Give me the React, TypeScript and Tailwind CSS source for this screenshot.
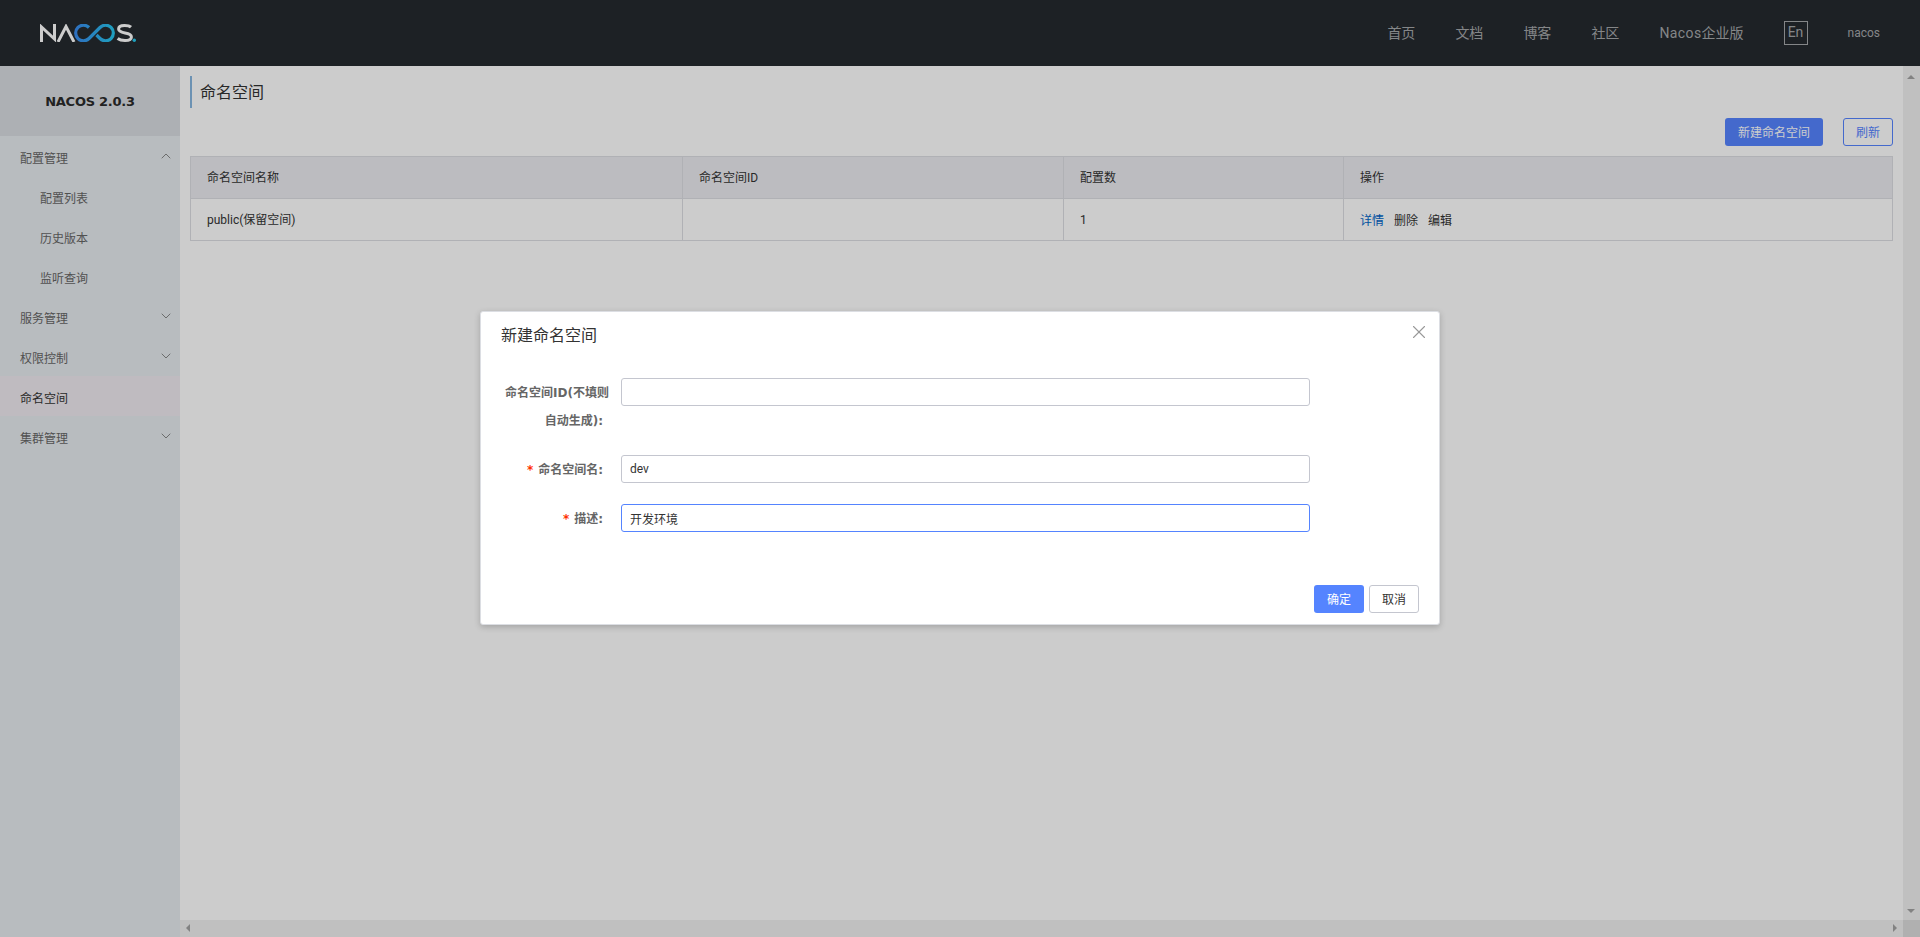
import React from 'react';
import { ChevronDown, ChevronUp, X } from 'lucide-react';

const navLinks = ['首页', '文档', '博客', '社区'];

const menu = [
  { label: '配置管理', arrow: 'up' },
  { label: '配置列表', child: true },
  { label: '历史版本', child: true },
  { label: '监听查询', child: true },
  { label: '服务管理', arrow: 'down' },
  { label: '权限控制', arrow: 'down' },
  { label: '命名空间', active: true },
  { label: '集群管理', arrow: 'down' },
];

const tableCols = 'grid grid-cols-[492px_381px_280px_1fr]';
const labelFont = "font-['DejaVu_Sans','Noto_Sans_CJK_SC',sans-serif] font-bold";

function Logo() {
  return (
    <svg width="96" height="18" viewBox="0 0 96 18" fill="none" strokeWidth="3">
      <defs>
        <linearGradient id="nacosLoop" x1="35" y1="0" x2="75" y2="0" gradientUnits="userSpaceOnUse">
          <stop offset="0" stopColor="#3a8cf0" />
          <stop offset="1" stopColor="#26c8ee" />
        </linearGradient>
      </defs>
      <path d="M1.5 18V3L14.5 15V0" stroke="#ffffff" />
      <path d="M18 18L26 2.5L34 18" stroke="#ffffff" />
      <path
        d="M49 3.5A7.8 7.8 0 1 0 49 14.5L60 3.5A7.8 7.8 0 1 1 60 14.5L56.5 11"
        stroke="url(#nacosLoop)"
        strokeWidth="3.2"
      />
      <path
        d="M91 3.2C89.5 1.8 87 1.5 84.5 1.5C81 1.5 78.6 2.8 78.6 5.1C78.6 10.5 91.4 7.5 91.4 12.9C91.4 15.2 89 16.5 85 16.5C82.3 16.5 79.6 16 77.6 14.5"
        stroke="#ffffff"
      />
      <circle cx="94.3" cy="16.2" r="1.7" fill="#26c8ee" />
    </svg>
  );
}

function Field({ value, focused }: { value: string; focused?: boolean }) {
  return (
    <input
      readOnly
      value={value}
      className={`h-7 w-[689px] rounded-[3px] border bg-white px-2 text-xs text-[#333] outline-none ${
        focused ? 'border-[#5584ff]' : 'border-[#c4c6cf]'
      }`}
    />
  );
}

export default function App() {
  return (
    <div className="relative h-[937px] w-[1920px] overflow-hidden bg-white font-['Roboto','Noto_Sans_CJK_SC',sans-serif] text-xs text-[#333]">
      <header className="flex h-[66px] items-center bg-[#252a2f] pl-10 pr-10">
        <Logo />
        <nav className="ml-auto flex items-center text-sm text-[#a6a8ab]">
          {navLinks.map((link) => (
            <a key={link} className="mr-10">
              {link}
            </a>
          ))}
          <a className="mr-10">
            <span className="tracking-[0.4px]">Nacos</span>企业版
          </a>
          <span className="flex h-6 w-6 items-center justify-center border border-[#a6a8ab] pb-[2px] text-sm">En</span>
          <span className="ml-10 text-xs">nacos</span>
        </nav>
      </header>

      <div className="flex h-[871px]">
        <aside className="w-[180px] shrink-0 bg-[#e6ebef]">
          <div className="flex h-[70px] items-center justify-center bg-[#d9dce1] pt-[1px] font-['DejaVu_Sans',sans-serif] text-[13px] font-bold tracking-[-0.25px] text-[#2b2b2b]">
            NACOS 2.0.3
          </div>
          {menu.map((item) => (
            <div
              key={item.label}
              className={`relative flex h-10 items-center pt-[6px] ${item.child ? 'pl-10' : 'pl-5'} ${
                item.active ? 'bg-[#efeaf0] text-[#333]' : 'text-[#666]'
              }`}
            >
              {item.label}
              {item.arrow === 'up' && (
                <ChevronUp size={16} strokeWidth={1.3} className="absolute right-[6px] top-[12px] text-[#777]" />
              )}
              {item.arrow === 'down' && (
                <ChevronDown size={16} strokeWidth={1.3} className="absolute right-[6px] top-[12px] text-[#777]" />
              )}
            </div>
          ))}
        </aside>

        <div className="flex min-w-0 flex-1 flex-col">
          <div className="flex min-h-0 flex-1">
            <main className="min-w-0 flex-1 px-[10px] pt-[10px]">
              <h1 className="flex h-8 items-center border-l-2 border-[#88b7e0] pl-2 pt-[2px] text-base font-normal text-[#333]">
                命名空间
              </h1>
              <div className="mt-[10px] flex justify-end gap-5">
                <button className="h-7 w-[98px] rounded-[3px] bg-[#5584ff] pt-[2px] text-xs text-white">新建命名空间</button>
                <button className="h-7 w-[50px] rounded-[3px] border border-[#5584ff] pt-[2px] text-xs text-[#5584ff]">
                  刷新
                </button>
              </div>
              <div className="mt-[10px] border border-[#dcdee3]">
                <div className={`${tableCols} h-[41px] items-center bg-[#ebecf0]`}>
                  <div className="flex h-full items-center border-r border-[#dcdee3] pl-4">命名空间名称</div>
                  <div className="flex h-full items-center border-r border-[#dcdee3] pl-4">命名空间ID</div>
                  <div className="flex h-full items-center border-r border-[#dcdee3] pl-4">配置数</div>
                  <div className="pl-4">操作</div>
                </div>
                <div className={`${tableCols} h-[42px] items-center border-t border-[#dcdee3]`}>
                  <div className="flex h-full items-center border-r border-[#dcdee3] pl-4">public(保留空间)</div>
                  <div className="h-full border-r border-[#dcdee3]" />
                  <div className="flex h-full items-center border-r border-[#dcdee3] pl-4">1</div>
                  <div className="flex items-center pl-4 pt-[2px]">
                    <a className="mr-[10px] text-[#0064c8]">详情</a>
                    <a className="mr-[10px]">删除</a>
                    <a>编辑</a>
                  </div>
                </div>
              </div>
            </main>
            <div className="relative w-[17px] shrink-0 bg-[#f1f1f1]">
              <span className="absolute left-[4px] top-[9px] h-0 w-0 border-x-4 border-b-4 border-x-transparent border-b-[#a3a3a3]" />
              <span className="absolute bottom-[7px] left-[4px] h-0 w-0 border-x-4 border-t-4 border-x-transparent border-t-[#a3a3a3]" />
            </div>
          </div>
          <div className="flex h-[17px] shrink-0">
            <div className="relative flex-1 bg-[#f1f1f1]">
              <span className="absolute left-[6px] top-[4px] h-0 w-0 border-y-4 border-r-4 border-y-transparent border-r-[#a3a3a3]" />
              <span className="absolute right-[6px] top-[4px] h-0 w-0 border-y-4 border-l-4 border-y-transparent border-l-[#a3a3a3]" />
            </div>
            <div className="w-[17px] bg-[#dcdcdc]" />
          </div>
        </div>
      </div>

      <div className="absolute inset-0 bg-black/20" />

      <div className="absolute left-[480px] top-[311px] h-[314px] w-[960px] rounded-[3px] border border-[#dcdee3] bg-white px-5 shadow-[0_2px_6px_rgba(0,0,0,0.2)]">
        <button className="absolute right-[9px] top-[9px] text-[#999]">
          <X size={22} strokeWidth={1.2} />
        </button>
        <div className="pt-[13px] text-base leading-[22px] text-[#333]">新建命名空间</div>
        <div className="mt-[31px] flex flex-col gap-[21px]">
          <div className="flex h-14 items-start">
            <label className={`w-[120px] shrink-0 text-right text-[#666] ${labelFont}`}>
              <span className="block h-7 whitespace-nowrap pr-3 leading-[30px]">命名空间ID(不填则</span>
              <span className="block h-7 pr-[18px] leading-[30px]">自动生成):</span>
            </label>
            <Field value="" />
          </div>
          <div className="flex h-7 items-start">
            <label className={`h-7 w-[120px] shrink-0 pr-[18px] text-right leading-[30px] text-[#666] ${labelFont}`}>
              <span className="mr-[5px] text-[#ff3000]">*</span>命名空间名:
            </label>
            <Field value="dev" />
          </div>
          <div className="flex h-7 items-start">
            <label className={`h-7 w-[120px] shrink-0 pr-[18px] text-right leading-[30px] text-[#666] ${labelFont}`}>
              <span className="mr-[5px] text-[#ff3000]">*</span>描述:
            </label>
            <Field value="开发环境" focused />
          </div>
        </div>
        <div className="mt-[53px] flex justify-end gap-[5px]">
          <button className="h-7 w-[50px] rounded-[3px] bg-[#5584ff] pt-[2px] text-xs text-white">确定</button>
          <button className="h-7 w-[50px] rounded-[3px] border border-[#c4c6cf] bg-white pt-[2px] text-xs text-[#333]">取消</button>
        </div>
      </div>
    </div>
  );
}
